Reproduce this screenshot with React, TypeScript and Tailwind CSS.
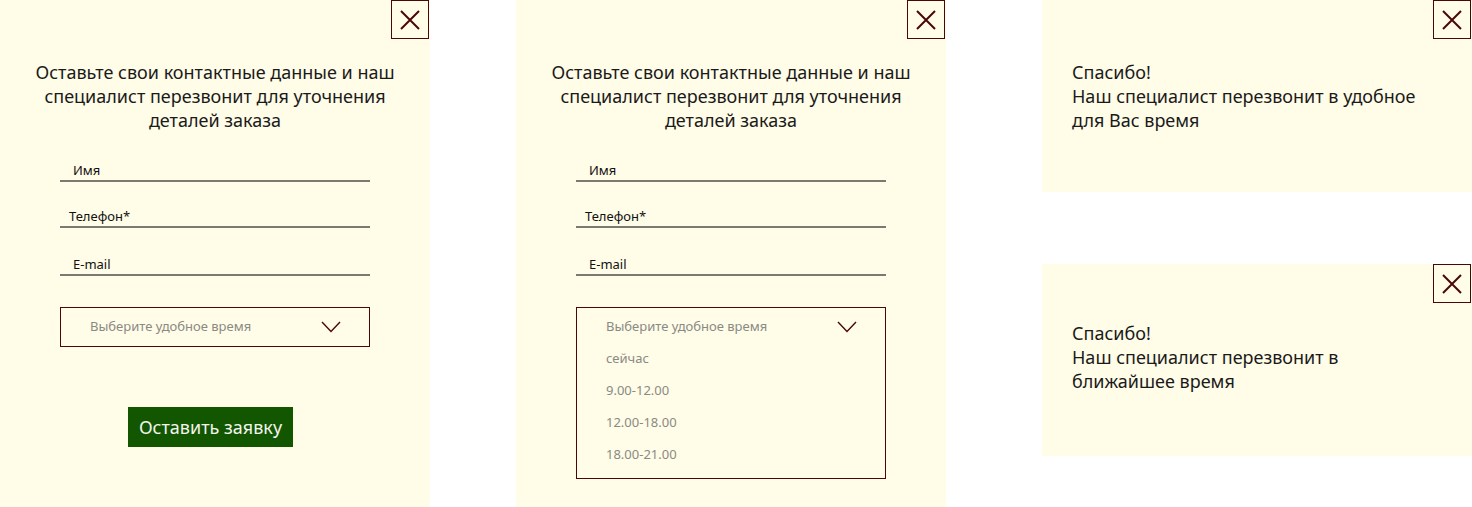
const CloseButton = () => (
  <button className="absolute top-0 right-px flex h-[39px] w-[38px] items-center justify-center border border-[#4a0707] bg-transparent">
    <svg width="22" height="22" viewBox="0 0 22 22" fill="none">
      <path d="M2 2L20 20M20 2L2 20" stroke="#4a0707" strokeWidth="2" />
    </svg>
  </button>
);

const Chevron = () => (
  <svg width="20" height="12" viewBox="0 0 20 12" fill="none">
    <path d="M1 1L10 10.5L19 1" stroke="#4a0707" strokeWidth="1.4" />
  </svg>
);

const Field = ({ label, className }: { label: string; className: string }) => (
  <div className={`border-b-2 border-[#7a7a72] pb-[2px] ${className}`}>
    <span className="block text-[13px] leading-4 text-[#111]">{label}</span>
  </div>
);

const OPTIONS = ["сейчас", "9.00-12.00", "12.00-18.00", "18.00-21.00"];

const FormPanel = ({ open }: { open: boolean }) => (
  <div className="relative h-[507px] w-[430px] shrink-0 bg-[#fffce8]">
    <CloseButton />
    <p className="px-[30px] pt-[60px] text-center text-[18px] leading-6 text-[#1a1a1a]">
      Оставьте свои контактные данные и наш
      <br />
      специалист перезвонит для уточнения
      <br />
      деталей заказа
    </p>

    {/* Fields */}
    <div className="mx-[60px] mt-[30px] w-[310px]">
      <Field label="Имя" className="border-[#2a2a2a] pl-[13px]" />
      <Field label="Телефон*" className="mt-[26px] pl-[9px]" />
      <Field label="E-mail" className="mt-[28px] pl-[13px]" />

      {open ? (
        <div className="mt-[31px] border border-[#4a0707] pt-[3px] pb-[7px]">
          <div className="flex h-8 items-center justify-between pl-[29px] pr-[28px] text-[13px] text-[#8a8a84]">
            <span>Выберите удобное время</span>
            <Chevron />
          </div>
          {OPTIONS.map((o) => (
            <div
              key={o}
              className="flex h-8 items-center pl-[29px] text-[13px] text-[#8a8a84]"
            >
              {o}
            </div>
          ))}
        </div>
      ) : (
        <div className="mt-[31px] border border-[#4a0707]">
          <div className="flex h-[38px] items-center justify-between pl-[29px] pr-[28px] text-[13px] text-[#8a8a84]">
            <span>Выберите удобное время</span>
            <Chevron />
          </div>
        </div>
      )}
    </div>

    {!open && (
      <button className="ml-[128px] mt-[60px] h-10 w-[165px] bg-[#125700] text-[18px] text-[#f4f4ee]">
        Оставить заявку
      </button>
    )}
  </div>
);

const ThanksPanel = ({ lines, top }: { lines: string[]; top: string }) => (
  <div className={`relative h-[192px] w-[430px] bg-[#fffce8] pl-[30px] ${top}`}>
    <CloseButton />
    <p className="text-[18px] leading-6 text-[#1a1a1a]">
      {lines.map((l, i) => (
        <span key={i} className="block">
          {l}
        </span>
      ))}
    </p>
  </div>
);

export default function App() {
  return (
    <div
      className="flex h-[507px] w-[1472px] bg-white"
      style={{ fontFamily: '"Noto Sans", "Open Sans", sans-serif' }}
    >
      <FormPanel open={false} />
      <div className="ml-[86px]">
        <FormPanel open={true} />
      </div>
      <div className="ml-[96px] flex flex-col gap-[72px]">
        <ThanksPanel
          top="pt-[60px]"
          lines={["Спасибо!", "Наш специалист перезвонит в удобное", "для Вас время"]}
        />
        <ThanksPanel
          top="pt-[57px]"
          lines={["Спасибо!", "Наш специалист перезвонит в", "ближайшее время"]}
        />
      </div>
    </div>
  );
}
